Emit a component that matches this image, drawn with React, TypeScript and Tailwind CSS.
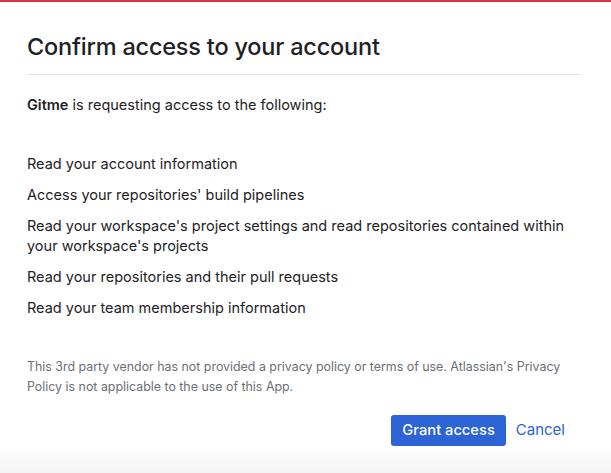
const scopes = [
  "Read your account information",
  "Access your repositories' build pipelines",
  "Read your workspace's project settings and read repositories contained within your workspace's projects",
  "Read your repositories and their pull requests",
  "Read your team membership information",
];

export default function App() {
  return (
    <div
      className="w-[611px] h-[473px] flex flex-col bg-white text-[#1f2125]"
      style={{ fontFamily: "Inter, 'Noto Sans', sans-serif" }}
    >
      <div className="h-[2px] bg-[#e0303f]" />
      <div className="flex-1 px-[27px] pr-[30px] flex flex-col bg-gradient-to-b from-white from-[94%] to-[#f4f4f4]">
        <h1 className="mt-[30px] text-[23.5px] leading-[30px] font-medium tracking-[-0.2px]">
          Confirm access to your account
        </h1>
        <div className="mt-[12px] h-px bg-[#dfe1e4]" />
        <p className="mt-[20px] text-[14.5px] leading-[20px]">
          <span className="font-semibold">Gitme</span> is requesting access to the following:
        </p>
        <ul className="mt-[39px] flex flex-col gap-[11px] text-[14.5px] leading-[20px]">
          {scopes.map((s) => (
            <li key={s}>{s}</li>
          ))}
        </ul>
        <p className="mt-[39px] text-[12.4px] leading-[20px] text-[#6b6e76]">
          This 3rd party vendor has not provided a privacy policy or terms of use. Atlassian's Privacy{" "}
          <br />
          Policy is not applicable to the use of this App.
        </p>
        <div className="mt-[18px] flex items-center justify-end gap-[10px] pr-[16px]">
          <button className="h-[31px] px-[11px] rounded-[3px] bg-[#2c63d5] text-white text-[14.7px] font-medium">
            Grant access
          </button>
          <button className="text-[15px] text-[#2c63d5]">Cancel</button>
        </div>
      </div>
    </div>
  );
}
